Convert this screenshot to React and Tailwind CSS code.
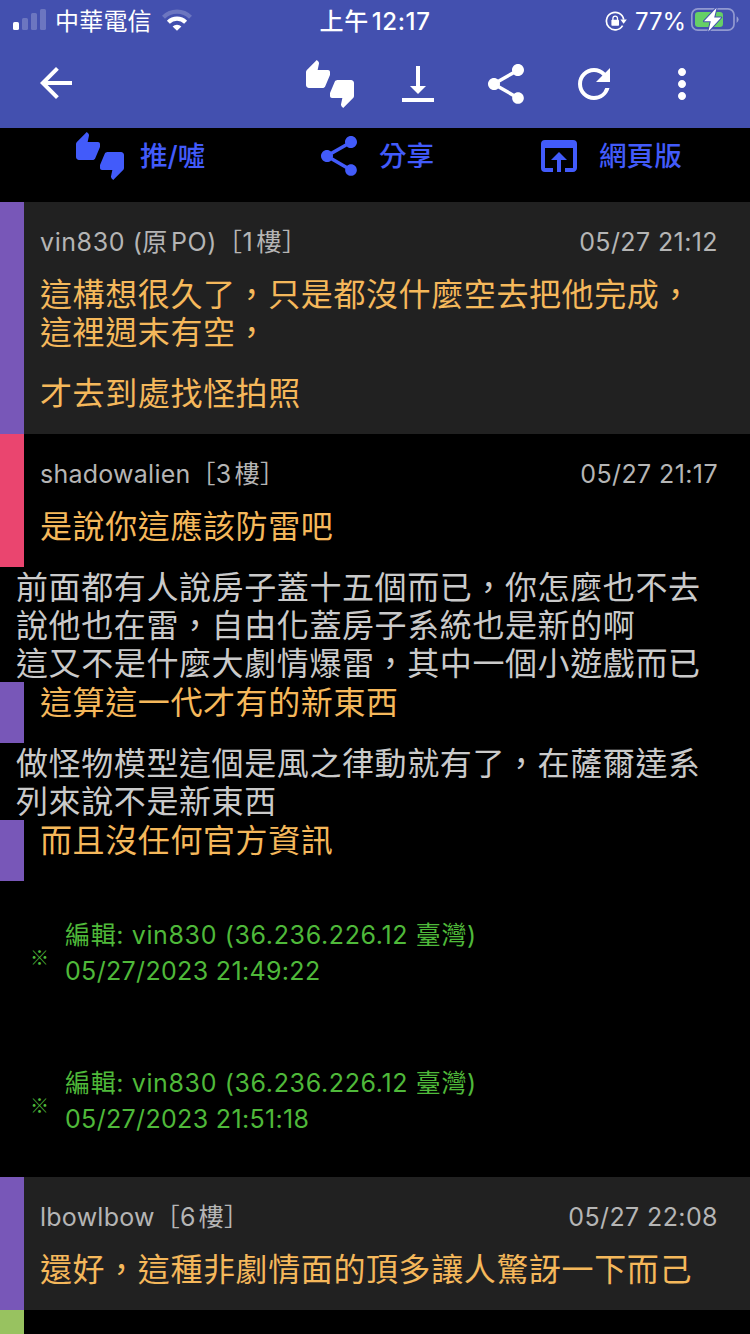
import {
  MdArrowBack,
  MdMoreVert,
  MdOpenInBrowser,
  MdRefresh,
  MdShare,
  MdThumbsUpDown,
  MdVerticalAlignBottom,
} from 'react-icons/md'

function Signal() {
  return (
    <svg className="ml-[13px] shrink-0" width="33" height="22" viewBox="0 0 33 22" fill="#fff">
      <rect x="0" y="13" width="6" height="8" rx="1.6" />
      <g opacity=".22">
        <rect x="9" y="9" width="6" height="12" rx="1.6" />
        <rect x="18" y="4" width="6" height="17" rx="1.6" />
        <rect x="27" y="0" width="6" height="21" rx="1.6" />
      </g>
    </svg>
  )
}

function Wifi() {
  return (
    <svg className="ml-[10px] shrink-0" width="30" height="22" viewBox="0 0 30 22" fill="none" stroke="#fff">
      <path d="M1.5 8.2A19.2 19.2 0 0 1 28.5 8.2" strokeWidth="4.2" opacity=".22" />
      <path d="M6.4 13.2A12.2 12.2 0 0 1 23.6 13.2" strokeWidth="4.2" />
      <path d="M15 21.8L10.6 17.4A6.4 6.4 0 0 1 19.4 17.4Z" fill="#fff" stroke="none" />
    </svg>
  )
}

function RotationLock() {
  return (
    <svg className="mt-px shrink-0" width="22" height="22" viewBox="0 0 22 22" fill="none" stroke="#fff" strokeWidth="1.7">
      <path d="M17.6 15.6A8.7 8.7 0 1 1 18.7 9.6" />
      <path d="M15.4 9.6H21.8L18.6 13.8Z" fill="#fff" stroke="none" />
      <rect x="6.4" y="9.8" width="7.6" height="6" rx=".8" fill="#fff" stroke="none" />
      <path d="M7.9 10.4V8.4A2.3 2.3 0 0 1 12.5 8.4V10.4" strokeWidth="1.3" />
    </svg>
  )
}

function Battery() {
  return (
    <svg className="shrink-0" width="49" height="26" viewBox="0 0 49 26" fill="none">
      <rect x="1.8" y="1.8" width="42.2" height="21.4" rx="6" stroke="#fff" strokeOpacity=".42" strokeWidth="1.7" />
      <path d="M46.6 9.3Q48.6 10.5 48.6 12.5T46.6 15.9Z" fill="#fff" fillOpacity=".45" />
      <rect x="5" y="5" width="28" height="15" rx="3.2" fill="#66cf66" />
      <path
        d="M26.6 .7L14 14.2H20.8L18.3 24.5L31.2 10.4H24.2Z"
        fill="#fff"
        stroke="#4350af"
        strokeWidth="2"
        paintOrder="stroke"
        strokeLinejoin="round"
      />
    </svg>
  )
}

function StatusBar() {
  return (
    <div className="grid h-10 grid-cols-3 items-center text-[24px] leading-[37px] whitespace-nowrap">
      <div className="flex items-center">
        <Signal />
        <span className="ml-[9px] pt-[2px] tracking-[0.2px]">中華電信</span>
        <Wifi />
      </div>
      <div className="pt-[2px] text-center font-medium tracking-[0.6px] [text-autospace:normal]">上午12:17</div>
      <div className="flex items-center justify-end pr-[11px]">
        <RotationLock />
        <span className="mr-[4px] ml-[8px] pt-[2px] tracking-[-0.1px]">77%</span>
        <Battery />
      </div>
    </div>
  )
}

function Toolbar() {
  return (
    <div className="flex h-[88px] items-center justify-between pr-[44px] pl-8 text-[48px]">
      <MdArrowBack className="-mt-0.5" />
      <div className="flex gap-10">
        <MdThumbsUpDown />
        <MdVerticalAlignBottom />
        <MdShare />
        <MdRefresh />
        <MdMoreVert />
      </div>
    </div>
  )
}

function Action({ icon: Icon, label, className }) {
  return (
    <div className={`flex items-center gap-4 ${className}`}>
      <Icon className="text-[48px]" />
      <span className="pt-[2px]">{label}</span>
    </div>
  )
}

function Comment({ bar, bg, user, userClass, time, body }) {
  return (
    <div className={`flex ${bg}`}>
      <div className={`w-6 shrink-0 ${bar}`} />
      <div className="flex-1 pt-[22px] pr-8 pl-4">
        <div className="flex justify-between text-[25px] leading-9 text-[#b5b5b5]">
          <span className={`[text-autospace:normal] ${userClass}`}>{user}</span>
          <span className="tracking-[0.4px]">{time}</span>
        </div>
        <div className="mt-4 text-[#f5b85b]">
          {body.map((p) => (
            <p key={p} className="mb-[23px] whitespace-pre">{p}</p>
          ))}
        </div>
      </div>
    </div>
  )
}

function Reply({ text }) {
  return (
    <div className="flex h-[61px]">
      <div className="w-6 shrink-0 bg-[#7857b8]" />
      <p className="pt-[2px] pl-4 text-[#f5b85b]">{text}</p>
    </div>
  )
}

function Quote({ text }) {
  return <p className="px-4 pt-[2px] whitespace-pre text-[#cacaca]">{text}</p>
}

function Edited({ time }) {
  return (
    <div className="flex h-[148px] items-center pb-1 pl-[30px] text-[25px] leading-9 text-[#4fb93a]">
      <span className="w-[35px] pt-2 font-['Noto_Sans_CJK_TC',sans-serif] text-[19px]">※</span>
      <div>
        <p className="tracking-[0.63px]">編輯: vin830 (36.236.226.12 臺灣)</p>
        <p className="tracking-[0.34px]">{time}</p>
      </div>
    </div>
  )
}

export default function App() {
  return (
    <div className="h-[1334px] w-[750px] overflow-hidden bg-black font-[Inter,'Noto_Sans_CJK_TC',sans-serif]">
      <header className="bg-[#4350af] text-white">
        <StatusBar />
        <Toolbar />
      </header>

      <div className="flex h-[74px] items-center pb-[18px] pl-[76px] text-[27.6px] font-medium text-[#425bfa]">
        <Action className="w-[239px]" icon={MdThumbsUpDown} label="推/噓" />
        <Action className="w-[220px]" icon={MdShare} label="分享" />
        <Action className="" icon={MdOpenInBrowser} label="網頁版" />
      </div>

      <main className="text-[32px] leading-[38px] tracking-[0.6px]">
        <Comment
          bar="bg-[#7857b8]"
          bg="h-[232px] bg-[#212121]"
          user="vin830 (原PO)［1樓］"
          userClass="tracking-[0.58px]"
          time="05/27 21:12"
          body={['這構想很久了，只是都沒什麼空去把他完成，\n這裡週末有空，', '才去到處找怪拍照']}
        />
        <Comment
          bar="bg-[#ea456f]"
          bg="h-[133px]"
          user="shadowalien［3樓］"
          userClass="tracking-[0.25px]"
          time="05/27 21:17"
          body={['是說你這應該防雷吧']}
        />
        <div className="h-[115px]">
          <Quote text={'前面都有人說房子蓋十五個而已，你怎麼也不去\n說他也在雷，自由化蓋房子系統也是新的啊\n這又不是什麼大劇情爆雷，其中一個小遊戲而已'} />
        </div>
        <Reply text="這算這一代才有的新東西" />
        <div className="h-[77px]">
          <Quote text={'做怪物模型這個是風之律動就有了，在薩爾達系\n列來說不是新東西'} />
        </div>
        <Reply text="而且沒任何官方資訊" />
        <Edited time="05/27/2023 21:49:22" />
        <Edited time="05/27/2023 21:51:18" />
        <Comment
          bar="bg-[#7857b8]"
          bg="h-[133px] bg-[#212121]"
          user="lbowlbow［6樓］"
          userClass="tracking-[0.25px]"
          time="05/27 22:08"
          body={['還好，這種非劇情面的頂多讓人驚訝一下而己']}
        />
        <div className="h-6 w-6 bg-[#98c260]" />
      </main>
    </div>
  )
}
